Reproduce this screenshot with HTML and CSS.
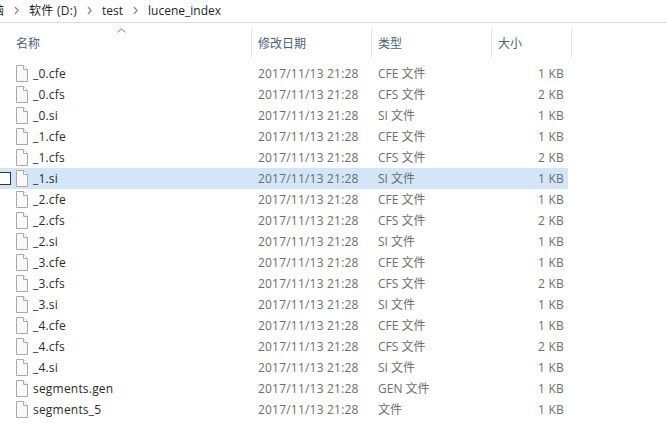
FILE: index.html
```html
<!DOCTYPE html>
<html lang="zh">
<head>
<meta charset="utf-8">
<title>lucene_index</title>
<link rel="stylesheet" href="styles.css">
</head>
<body>
<svg width="0" height="0" class="defs"><defs>
<symbol id="file" viewBox="0 0 13 17"><path d="M1.5 .5H8.5L12.5 4.5V16.5H1.5Z" fill="#f9f9f9" stroke="#a9a9a9"/><path d="M8.5 .5V4.5H12.5" fill="#fff" stroke="#a9a9a9"/></symbol>
<symbol id="sep" viewBox="0 0 5 9"><path d="M1 1 4.2 4.5 1 8" fill="none" stroke="#8a8a8a" stroke-width="1.3"/></symbol>
</defs></svg>
<nav class="crumbs">
<span class="cut">脑</span><svg class="sep"><use href="#sep"/></svg><span class="drive">软件 (D:)</span><svg class="sep"><use href="#sep"/></svg><span>test</span><svg class="sep"><use href="#sep"/></svg><span>lucene_index</span>
</nav>
<section class="list">
<header class="head">
<div class="col name"><span class="chev"><svg width="9" height="5" viewBox="0 0 9 5"><path d="M.5 4.5 4.5 .8 8.5 4.5" fill="none" stroke="#777"/></svg></span>名称</div>
<div class="col date">修改日期</div>
<div class="col type">类型</div>
<div class="col size">大小</div>
</header>
<div class="rows">
<div class="row"><span class="name"><svg class="ico"><use href="#file"/></svg>_0.cfe</span><span class="date">2017/11/13 21:28</span><span class="type">CFE 文件</span><span class="size">1 KB</span></div>
<div class="row"><span class="name"><svg class="ico"><use href="#file"/></svg>_0.cfs</span><span class="date">2017/11/13 21:28</span><span class="type">CFS 文件</span><span class="size">2 KB</span></div>
<div class="row"><span class="name"><svg class="ico"><use href="#file"/></svg>_0.si</span><span class="date">2017/11/13 21:28</span><span class="type">SI 文件</span><span class="size">1 KB</span></div>
<div class="row"><span class="name"><svg class="ico"><use href="#file"/></svg>_1.cfe</span><span class="date">2017/11/13 21:28</span><span class="type">CFE 文件</span><span class="size">1 KB</span></div>
<div class="row"><span class="name"><svg class="ico"><use href="#file"/></svg>_1.cfs</span><span class="date">2017/11/13 21:28</span><span class="type">CFS 文件</span><span class="size">2 KB</span></div>
<div class="row selected"><i class="check"></i><span class="name"><svg class="ico"><use href="#file"/></svg>_1.si</span><span class="date">2017/11/13 21:28</span><span class="type">SI 文件</span><span class="size">1 KB</span></div>
<div class="row"><span class="name"><svg class="ico"><use href="#file"/></svg>_2.cfe</span><span class="date">2017/11/13 21:28</span><span class="type">CFE 文件</span><span class="size">1 KB</span></div>
<div class="row"><span class="name"><svg class="ico"><use href="#file"/></svg>_2.cfs</span><span class="date">2017/11/13 21:28</span><span class="type">CFS 文件</span><span class="size">2 KB</span></div>
<div class="row"><span class="name"><svg class="ico"><use href="#file"/></svg>_2.si</span><span class="date">2017/11/13 21:28</span><span class="type">SI 文件</span><span class="size">1 KB</span></div>
<div class="row"><span class="name"><svg class="ico"><use href="#file"/></svg>_3.cfe</span><span class="date">2017/11/13 21:28</span><span class="type">CFE 文件</span><span class="size">1 KB</span></div>
<div class="row"><span class="name"><svg class="ico"><use href="#file"/></svg>_3.cfs</span><span class="date">2017/11/13 21:28</span><span class="type">CFS 文件</span><span class="size">2 KB</span></div>
<div class="row"><span class="name"><svg class="ico"><use href="#file"/></svg>_3.si</span><span class="date">2017/11/13 21:28</span><span class="type">SI 文件</span><span class="size">1 KB</span></div>
<div class="row"><span class="name"><svg class="ico"><use href="#file"/></svg>_4.cfe</span><span class="date">2017/11/13 21:28</span><span class="type">CFE 文件</span><span class="size">1 KB</span></div>
<div class="row"><span class="name"><svg class="ico"><use href="#file"/></svg>_4.cfs</span><span class="date">2017/11/13 21:28</span><span class="type">CFS 文件</span><span class="size">2 KB</span></div>
<div class="row"><span class="name"><svg class="ico"><use href="#file"/></svg>_4.si</span><span class="date">2017/11/13 21:28</span><span class="type">SI 文件</span><span class="size">1 KB</span></div>
<div class="row"><span class="name"><svg class="ico"><use href="#file"/></svg>segments.gen</span><span class="date">2017/11/13 21:28</span><span class="type">GEN 文件</span><span class="size">1 KB</span></div>
<div class="row"><span class="name"><svg class="ico"><use href="#file"/></svg>segments_5</span><span class="date">2017/11/13 21:28</span><span class="type">文件</span><span class="size">1 KB</span></div>
</div>
</section>
</body>
</html>
```
FILE: styles.css
```css
* { box-sizing: border-box; }
html, body { margin: 0; height: 100%; overflow: hidden; background: #fff; }
body { font: 12px/15px "Open Sans", "Noto Sans CJK SC", sans-serif; color: #222; width: 667px; }
.defs { display: block; height: 0; }
.crumbs { height: 23px; display: flex; align-items: center; gap: 10px; padding: 0 0 1px 0; border-bottom: 1px solid #d9d9d9; font-size: 12px; color: #1f1f1f; }
.cut { width: 4px; overflow: hidden; white-space: nowrap; direction: rtl; }
.drive { letter-spacing: .28px; }
.sep { width: 5px; height: 9px; }
.head { display: flex; height: 29px; margin-top: 6px; font-size: 12px; color: #4c607a; }
.col { position: relative; display: flex; align-items: center; height: 29px; padding-left: 6px; border-right: 1px solid #e3e5e7; }
.head .name { width: 252px; padding-left: 16px; }
.head .date { width: 120px; }
.head .type { width: 120px; }
.head .size { width: 80px; }
.chev { position: absolute; left: 117px; top: -1px; line-height: 0; }
.rows { margin-top: 5px; width: 568px; }
.row { position: relative; display: flex; align-items: center; height: 21px; color: #6d6d6d; letter-spacing: .2px; }
.row .name { width: 252px; display: flex; align-items: center; color: #2a2a2a; padding-left: 15px; }
.row .date { width: 120px; padding-left: 6px; }
.row .type { width: 120px; padding-left: 6px; letter-spacing: 0; }
.row .size { width: 72px; text-align: right; }
.ico { width: 13px; height: 17px; margin-right: 5px; }
.selected { background: #d3e6f8; }
.check { position: absolute; left: -2px; top: 4px; width: 13px; height: 13px; border: 1px solid #333; background: #fff; }
```
